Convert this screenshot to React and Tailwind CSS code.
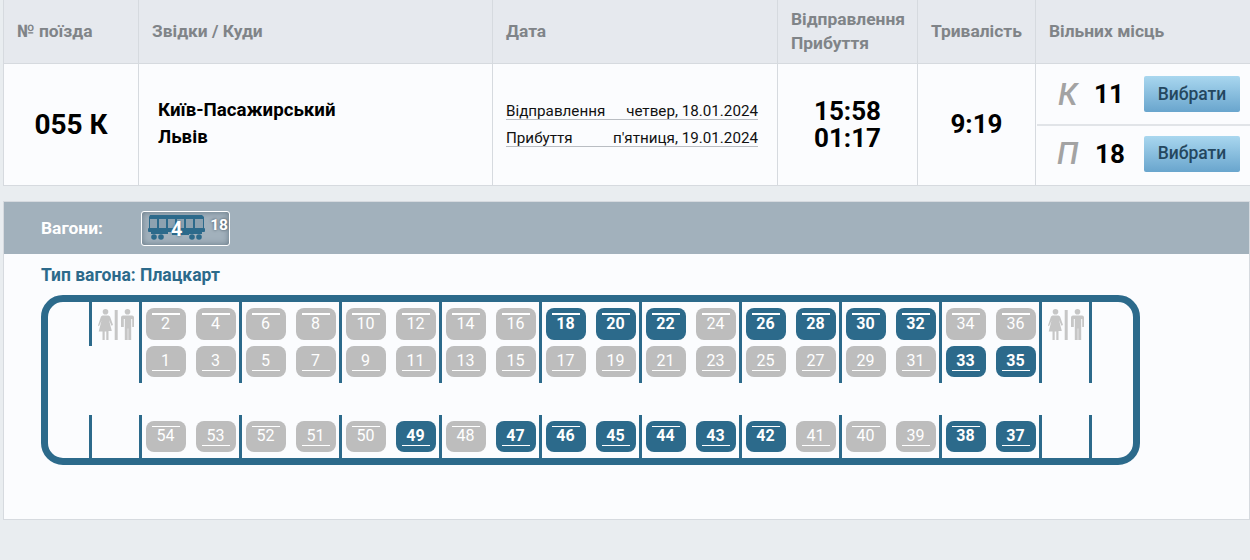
const FONT = "font-['Roboto','Liberation_Sans',sans-serif]";

const BLUE = new Set([18, 20, 22, 26, 28, 30, 32, 33, 35, 49, 47, 46, 45, 44, 43, 42, 38, 37]);

const topEven = [[2, 4], [6, 8], [10, 12], [14, 16], [18, 20], [22, 24], [26, 28], [30, 32], [34, 36]];
const topOdd = [[1, 3], [5, 7], [9, 11], [13, 15], [17, 19], [21, 23], [25, 27], [29, 31], [33, 35]];
const bottom = [[54, 53], [52, 51], [50, 49], [48, 47], [46, 45], [44, 43], [42, 41], [40, 39], [38, 37]];

function Seat({ n, h, thick }) {
  const free = BLUE.has(n);
  const even = n % 2 === 0;
  return (
    <div
      className={`relative w-10 ${h} rounded-lg flex items-center justify-center text-white text-base leading-none ${
        free ? "bg-[#2c6a8b] font-bold" : "bg-[#bdbdbd] font-normal"
      }`}
    >
      <span className="mt-[-1px] ml-[-1px]">{n}</span>
      <span
        className={`absolute left-[6px] w-7 bg-white ${thick ? "h-[2px]" : "h-px"} ${even ? "top-[5px]" : "bottom-[6px]"}`}
      />
    </div>
  );
}

function WC() {
  return (
    <svg width="36" height="32" viewBox="0 0 36 32" fill="#c6c6c6">
      <circle cx="7.500" cy="2.800" r="2.800" />
      <path d="M4.500 6.500h6l1.500 1 3 8.500-1.500.8-2.500-5.800 2.800 11H10.500V31H8.300v-8.500H6.700V31H4.500v-8.500H.7l2.800-11L1 17.300l-1-.9 3-8.900z" />
      <rect x="16.700" y="1" width="3" height="30" />
      <circle cx="29.500" cy="2.800" r="2.800" />
      <path d="M25 6.500h9q2 0 2 2V18h-1.800V10h-1v21h-2.900V19.500h-.6V31h-2.900V10h-1v8H23V8.500q0-2 2-2z" />
    </svg>
  );
}

function Train() {
  return (
    <svg width="57" height="26" viewBox="0 0 57 26" fill="#2c6a8b">
      <path d="M2 0h52l2 2v1H1V2z" />
      <rect x="2" y="3" width="53" height="11" fill="#8da2b0" />
      <path
        fillRule="evenodd"
        d="M1 2h55v12H1zM2 4v9h7V4zM11 4v9h7V4zM20 4v9h7V4zM29 4v9h7V4zM38 4v9h7V4zM47 4v9h8V4z"
      />
      <rect x="0" y="13" width="57" height="4" rx="1" />
      <rect x="24" y="17" width="17" height="3" />
      <path d="M3 17h17v2H3zM40 17h14v2H40z" />
      <circle cx="6" cy="22" r="2.800" />
      <circle cx="13" cy="22" r="2.800" />
      <circle cx="44" cy="22" r="2.800" />
      <circle cx="51" cy="22" r="2.800" />
    </svg>
  );
}

function Head({ w, children, extra = "" }) {
  return (
    <div className={`${w} h-full shrink-0 border-l border-[#d6dadf] flex items-center pb-[2px] text-[17.400px] font-bold leading-6 text-[#808488] ${extra}`}>
      {children}
    </div>
  );
}

function Cell({ w, children, extra = "" }) {
  return (
    <div className={`${w} h-full shrink-0 border-l border-[#d6dadf] flex ${extra}`}>
      {children}
    </div>
  );
}

function DateLine({ label, value }) {
  return (
    <div className="flex justify-between items-end w-[252px] h-[27px] border-b border-[#b9bdc2] text-[15.200px] leading-4 text-[#111]">
      <span>{label}</span>
      <span>{value}</span>
    </div>
  );
}

function Choice({ letter, count, extra, numClass }) {
  return (
    <div className={`flex items-center ${extra}`}>
      <span className="w-[37px] ml-[21px] text-[31px] leading-none italic font-medium text-[#a3a3a3]">{letter}</span>
      <span className={`text-[26px] leading-none font-bold text-black ${numClass}`}>{count}</span>
      <button className="ml-auto mr-[10px] w-[96px] h-[36px] rounded-[2px] bg-gradient-to-b from-[#a9d7ef] to-[#69a5cd] text-[17.500px] font-medium text-[#24475f]">
        Вибрати
      </button>
    </div>
  );
}

function Pair({ pair, h, thick }) {
  return (
    <div className="flex gap-[10px]">
      <Seat n={pair[0]} h={h} thick={thick} />
      <Seat n={pair[1]} h={h} thick={thick} />
    </div>
  );
}

export default function App() {
  return (
    <div className={`${FONT} min-h-screen bg-[#e9edf0] overflow-hidden`}>
      {/* table header */}
      <div className="ml-[3px] flex items-stretch h-[64px] bg-[#e6e9ee] border-b border-[#d6dadf]">
        <Head w="w-[135px]" extra="pl-[13px]">№ поїзда</Head>
        <Head w="w-[354px]" extra="pl-[13px]">Звідки / Куди</Head>
        <Head w="w-[285px]" extra="pl-[13px]">Дата</Head>
        <Head w="w-[140px]" extra="pl-[13px]">
          <span>Відправлення<br />Прибуття</span>
        </Head>
        <Head w="w-[118px]" extra="pl-[13px]">Тривалість</Head>
        <Head w="w-[215px]" extra="pl-[13px]">Вільних місць</Head>
      </div>

      {/* table row */}
      <div className="ml-[3px] flex items-stretch h-[122px] bg-[#fbfcfe] border-b border-[#d6dadf]">
        <Cell w="w-[135px]" extra="items-center justify-center">
          <span className="text-[28px] leading-none font-bold text-black">055 К</span>
        </Cell>
        <Cell w="w-[354px]" extra="items-center pl-[19px]">
          <div className="text-[18.700px] leading-[27px] font-bold text-black -mt-[1px]">
            Київ-Пасажирський<br />Львів
          </div>
        </Cell>
        <Cell w="w-[285px]" extra="flex-col justify-center pl-[13px] pb-[9px]">
          <DateLine label="Відправлення" value="четвер, 18.01.2024" />
          <DateLine label="Прибуття" value="п'ятниця, 19.01.2024" />
        </Cell>
        <Cell w="w-[140px]" extra="items-center justify-center">
          <div className="text-[26px] leading-[27px] font-bold text-black text-center">
            15:58<br />01:17
          </div>
        </Cell>
        <Cell w="w-[118px]" extra="items-center justify-center">
          <span className="text-[26px] leading-none font-bold text-black -mt-[1px]">9:19</span>
        </Cell>
        <Cell w="w-[215px]" extra="flex-col">
          <Choice letter="К" count="11" numClass="-ml-px" extra="h-[62px] ml-[1px] border-b-2 border-[#e1e4e8]" />
          <Choice letter="П" count="18" numClass="ml-px" extra="flex-1 pb-[4px]" />
        </Cell>
      </div>

      {/* wagon panel */}
      <div className="ml-[3px] mt-[15px] h-[319px] bg-[#fbfcfe] border border-[#d6dadf]">
        <div className="h-[52px] bg-[#a2b1bc] flex items-center pl-[37px]">
          <span className="w-[100px] text-[17.400px] font-bold text-white">Вагони:</span>
          <div className="relative w-[89px] h-[35px] rounded-[3px] border border-white pl-[6px] flex items-center shadow-[inset_0_0_6px_rgba(60,80,95,0.6)]">
            <Train />
            <span className="absolute left-[29px] top-[5px] text-[20px] leading-[24px] font-bold text-white [text-shadow:0_0_3px_#2c6a8b]">4</span>
            <span className="absolute right-[1px] top-[5px] text-[15.500px] leading-4 font-bold text-white [text-shadow:0_0_3px_#3a4a55]">18</span>
          </div>
        </div>

        <div className="pl-[37px] pt-[11px]">
          <div className="text-[17.500px] leading-5 font-bold text-[#2c6a8b]">Тип вагона: Плацкарт</div>

          <div className="mt-[10px] w-[1099px] h-[170px] border-[7px] border-[#2c6a8b] rounded-[22px]">
            {/* upper bay */}
            <div className="flex h-[81px] items-start">
              <div className="w-[41px] shrink-0" />
              <div className="w-[50px] h-[44px] shrink-0 border-l-[3px] border-[#2c6a8b] pl-[6px] pt-[7px]">
                <WC />
              </div>
              {topEven.map((pair, i) => (
                <div key={i} className="w-[100px] h-full shrink-0 border-l-[3px] border-[#2c6a8b] pl-1 pt-[6px] flex flex-col gap-[6px]">
                  <Pair pair={pair} h="h-[32px]" thick />
                  <Pair pair={topOdd[i]} h="h-[31px]" />
                </div>
              ))}
              <div className="w-[50px] h-full shrink-0 border-l-[3px] border-[#2c6a8b] pl-[6px] pt-[7px]">
                <WC />
              </div>
              <div className="h-full shrink-0 border-l-[3px] border-[#2c6a8b]" />
            </div>

            {/* lower bay */}
            <div className="flex h-[43px] mt-[32px]">
              <div className="w-[41px] shrink-0" />
              <div className="w-[50px] shrink-0 border-l-[3px] border-[#2c6a8b]" />
              {bottom.map((pair, i) => (
                <div key={i} className="w-[100px] shrink-0 border-l-[3px] border-[#2c6a8b] pl-1 pt-[6px]">
                  <Pair pair={pair} h="h-[31px]" />
                </div>
              ))}
              <div className="w-[50px] shrink-0 border-l-[3px] border-[#2c6a8b]" />
              <div className="shrink-0 border-l-[3px] border-[#2c6a8b]" />
            </div>
          </div>
        </div>
      </div>
    </div>
  );
}
